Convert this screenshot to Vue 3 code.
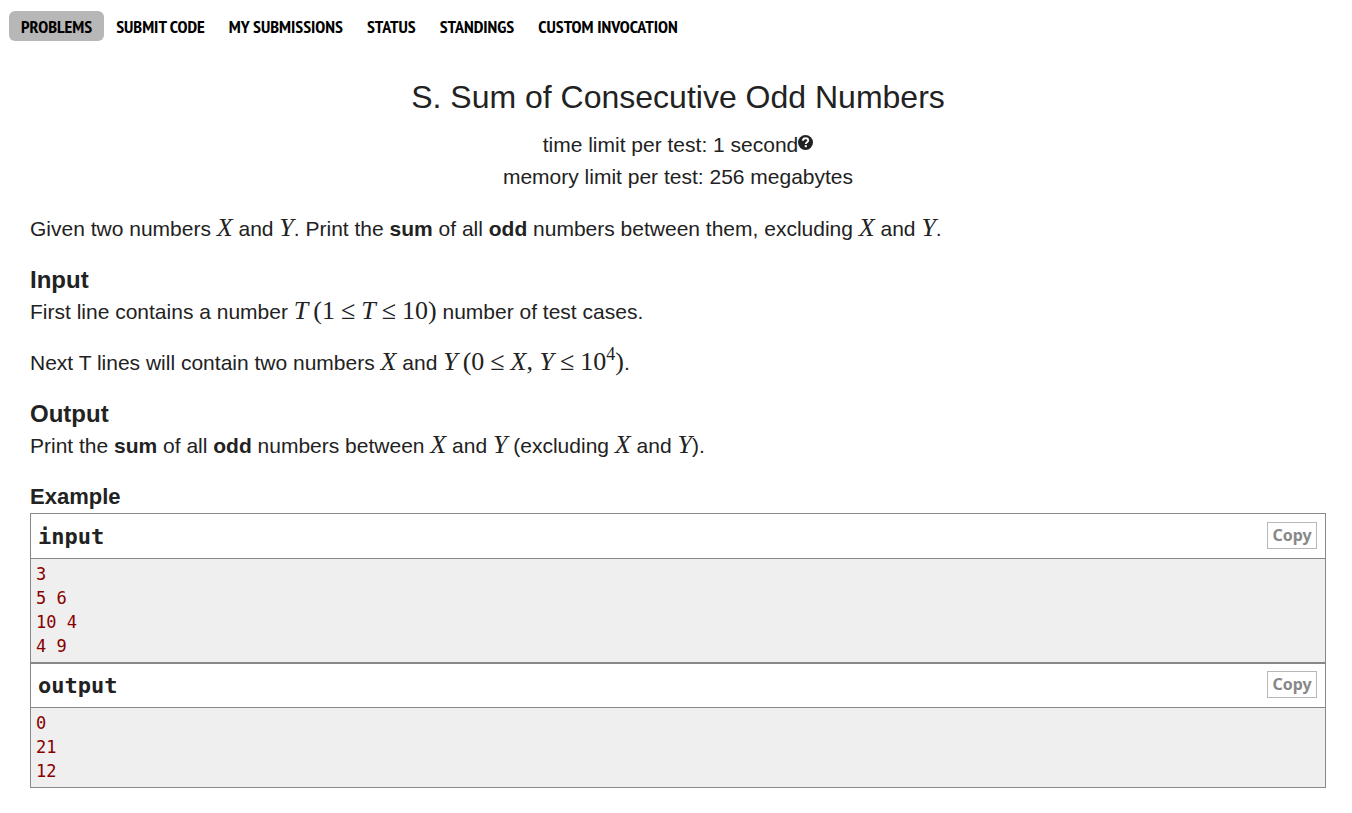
<script setup>
const tabs = ['Problems', 'Submit Code', 'My Submissions', 'Status', 'Standings', 'Custom Invocation']

const samples = [
  { name: 'input', text: '3\n5 6\n10 4\n4 9' },
  { name: 'output', text: '0\n21\n12' },
]

function copy(text) {
  navigator.clipboard?.writeText(text)
}
</script>

<template>
  <div class="page">
    <nav class="menu">
      <a v-for="(tab, i) in tabs" :key="tab" href="#" class="tab" :class="{ current: i === 0 }">{{ tab }}</a>
    </nav>

    <main class="statement">
      <header class="header">
        <h1 class="title">S. Sum of Consecutive Odd Numbers</h1>
        <div class="limit">time limit per test: 1 second<svg class="help" viewBox="0 0 16 16" role="img" aria-label="Help">
          <circle cx="8" cy="8" r="8" fill="#222" />
          <path d="M5.2 6.1C5.3 4.2 6.4 3.4 8.1 3.4c1.7 0 2.8 1 2.8 2.4 0 2-2.6 2-2.6 3.9" fill="none" stroke="#fff" stroke-width="2" />
          <rect x="7.2" y="10.8" width="2.2" height="2.2" fill="#fff" />
        </svg></div>
        <div class="limit">memory limit per test: 256 megabytes</div>
      </header>

      <p>Given two numbers <span class="math"><i>X</i></span> and <span class="math"><i>Y</i></span>. Print the <b>sum</b> of all <b>odd</b> numbers between them, excluding <span class="math"><i>X</i></span> and <span class="math"><i>Y</i></span>.</p>

      <section>
        <h2>Input</h2>
        <p>First line contains a number <span class="math"><i>T</i><span class="open">(</span>1<span class="rel">≤</span><i>T</i><span class="rel">≤</span>10)</span> number of test cases.</p>
        <p>Next T lines will contain two numbers <span class="math"><i>X</i></span> and <span class="math"><i>Y</i><span class="open">(</span>0<span class="rel">≤</span><i>X</i>, <i>Y</i><span class="rel">≤</span>10<sup>4</sup>)</span>.</p>
      </section>

      <section>
        <h2>Output</h2>
        <p>Print the <b>sum</b> of all <b>odd</b> numbers between <span class="math"><i>X</i></span> and <span class="math"><i>Y</i></span> (excluding <span class="math"><i>X</i></span> and <span class="math"><i>Y</i></span>).</p>
      </section>

      <section>
        <h3>Example</h3>
        <div v-for="sample in samples" :key="sample.name" class="sample">
          <div class="sample-head">
            <span>{{ sample.name }}</span>
            <button type="button" class="copy" @click="copy(sample.text)">Copy</button>
          </div>
          <pre>{{ sample.text }}</pre>
        </div>
      </section>
    </main>
  </div>
</template>

<style>
body {
  margin: 0;
  background: #fff;
}
</style>

<style scoped>
.page {
  color: #222;
  font-family: "Liberation Sans", Arial, sans-serif;
  font-size: 21px;
  line-height: 32px;
}
.menu {
  display: flex;
  padding: 11px 9px 0;
}
.tab {
  padding: 2px 12px 0;
  border-radius: 6px;
  color: #000;
  font-family: "PT Sans Narrow", "Liberation Sans Narrow", "Open Sans Condensed", "Liberation Sans", sans-serif;
  font-size: 18px;
  font-weight: 700;
  line-height: 28px;
  text-decoration: none;
  text-transform: uppercase;
  white-space: nowrap;
}
.tab.current {
  background: #b7b7b7;
}
.statement {
  padding: 32px 26px 24px 30px;
}
.header {
  margin-bottom: 20px;
  text-align: center;
}
.title {
  margin: 0 0 8px;
  font-size: 32px;
  font-weight: 400;
  line-height: 48px;
}
.help {
  width: 15px;
  height: 15px;
  vertical-align: 2px;
}
p {
  margin: 0 0 19px;
}
h2,
h3 {
  margin: 0;
  font-size: 24px;
  font-weight: 700;
  line-height: 32px;
}
h3 {
  font-size: 22px;
}
.math {
  font-family: "Liberation Serif", "Times New Roman", serif;
  font-size: 26px;
  line-height: 1;
  white-space: nowrap;
}
.open {
  margin-left: 5px;
}
.rel {
  margin: 0 6px;
}
sup {
  font-size: 18px;
  line-height: 0;
  vertical-align: 10px;
}
.sample {
  border: 1px solid #888;
}
.sample-head {
  display: flex;
  align-items: flex-start;
  justify-content: space-between;
  padding: 8px 8px 6px 7px;
  border-bottom: 1px solid #888;
  font-family: Consolas, "DejaVu Sans Mono", monospace;
  font-size: 22px;
  font-weight: 700;
  line-height: 30px;
}
.sample + .sample .sample-head {
  padding-top: 7px;
}
.copy {
  min-width: 50px;
  padding: 0 4px;
  border: 1px solid #b7b7b7;
  background: #fff;
  color: #888;
  font-family: "Noto Sans", sans-serif;
  font-size: 16px;
  font-weight: 700;
  line-height: 25px;
}
pre {
  margin: 0;
  padding: 3px 5px 4px;
  background: #efefef;
  color: #880000;
  font-family: Consolas, "DejaVu Sans Mono", monospace;
  font-size: 17px;
  line-height: 24px;
}
</style>
